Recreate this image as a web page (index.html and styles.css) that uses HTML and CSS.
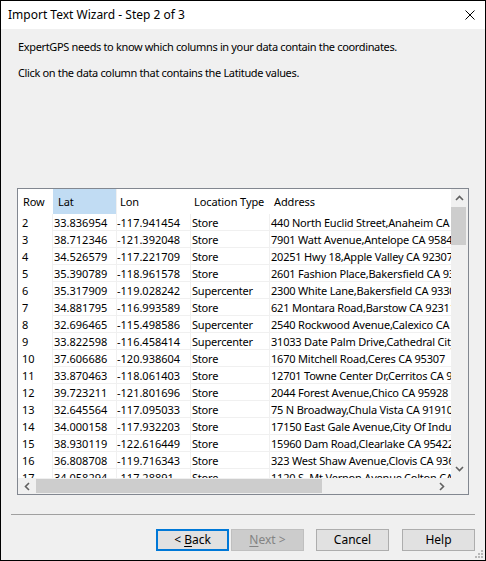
FILE: index.html
```html
<!DOCTYPE html>
<html>
<head>
<meta charset="utf-8">
<link rel="stylesheet" href="styles.css">
</head>
<body>
<div class="window">
  <div class="titlebar">
    <span class="title">Import Text Wizard - Step 2 of 3</span>
    <svg class="close" width="10" height="10" viewBox="0 0 10 10"><path d="M0.5 0.5 L9.5 9.5 M9.5 0.5 L0.5 9.5" stroke="#000" stroke-width="1" fill="none"/></svg>
  </div>
  <div class="content">
    <p class="intro">ExpertGPS needs to know which columns in your data contain the coordinates.</p>
    <p class="intro second">Click on the data column that contains the Latitude values.</p>
    <div class="grid">
      <div class="viewport">
        <div class="row head">
          <div class="c rn">Row</div><div class="c lat sel">Lat</div><div class="c lon">Lon</div><div class="c typ">Location Type</div><div class="c adr">Address</div>
        </div>
        <div class="row"><div class="c rn">2</div><div class="c lat">33.836954</div><div class="c lon">-117.941454</div><div class="c typ">Store</div><div class="c adr">440 North Euclid Street,Anaheim CA 92801</div></div>
        <div class="row"><div class="c rn">3</div><div class="c lat">38.712346</div><div class="c lon">-121.392048</div><div class="c typ">Store</div><div class="c adr">7901 Watt Avenue,Antelope CA 95843</div></div>
        <div class="row"><div class="c rn">4</div><div class="c lat">34.526579</div><div class="c lon">-117.221709</div><div class="c typ">Store</div><div class="c adr">20251 Hwy 18,Apple Valley CA 92307</div></div>
        <div class="row"><div class="c rn">5</div><div class="c lat">35.390789</div><div class="c lon">-118.961578</div><div class="c typ">Store</div><div class="c adr">2601 Fashion Place,Bakersfield CA 93306</div></div>
        <div class="row"><div class="c rn">6</div><div class="c lat">35.317909</div><div class="c lon">-119.028242</div><div class="c typ">Supercenter</div><div class="c adr">2300 White Lane,Bakersfield CA 93304</div></div>
        <div class="row"><div class="c rn">7</div><div class="c lat">34.881795</div><div class="c lon">-116.993589</div><div class="c typ">Store</div><div class="c adr">621 Montara Road,Barstow CA 92311</div></div>
        <div class="row"><div class="c rn">8</div><div class="c lat">32.696465</div><div class="c lon">-115.498586</div><div class="c typ">Supercenter</div><div class="c adr">2540 Rockwood Avenue,Calexico CA 92231</div></div>
        <div class="row"><div class="c rn">9</div><div class="c lat">33.822598</div><div class="c lon">-116.458414</div><div class="c typ">Supercenter</div><div class="c adr">31033 Date Palm Drive,Cathedral City CA 92234</div></div>
        <div class="row"><div class="c rn">10</div><div class="c lat">37.606686</div><div class="c lon">-120.938604</div><div class="c typ">Store</div><div class="c adr">1670 Mitchell Road,Ceres CA 95307</div></div>
        <div class="row"><div class="c rn">11</div><div class="c lat">33.870463</div><div class="c lon">-118.061403</div><div class="c typ">Store</div><div class="c adr">12701 Towne Center Dr,Cerritos CA 90703</div></div>
        <div class="row"><div class="c rn">12</div><div class="c lat">39.723211</div><div class="c lon">-121.801696</div><div class="c typ">Store</div><div class="c adr">2044 Forest Avenue,Chico CA 95928</div></div>
        <div class="row"><div class="c rn">13</div><div class="c lat">32.645564</div><div class="c lon">-117.095033</div><div class="c typ">Store</div><div class="c adr">75 N Broadway,Chula Vista CA 91910</div></div>
        <div class="row"><div class="c rn">14</div><div class="c lat">34.000158</div><div class="c lon">-117.932203</div><div class="c typ">Store</div><div class="c adr">17150 East Gale Avenue,City Of Industry CA 91745</div></div>
        <div class="row"><div class="c rn">15</div><div class="c lat">38.930119</div><div class="c lon">-122.616449</div><div class="c typ">Store</div><div class="c adr">15960 Dam Road,Clearlake CA 95422</div></div>
        <div class="row"><div class="c rn">16</div><div class="c lat">36.808708</div><div class="c lon">-119.716343</div><div class="c typ">Store</div><div class="c adr">323 West Shaw Avenue,Clovis CA 93612</div></div>
        <div class="row"><div class="c rn">17</div><div class="c lat">34.058294</div><div class="c lon">-117.28891</div><div class="c typ">Store</div><div class="c adr">1120 S. Mt Vernon Avenue,Colton CA 92324</div></div>
      </div>
      <div class="vscroll">
        <div class="arrow"><svg width="9" height="6" viewBox="0 0 9 6"><path d="M1 5 L4.5 1.5 L8 5" stroke="#606060" stroke-width="1.6" fill="none"/></svg></div>
        <div class="vthumb"></div>
        <div class="fill"></div>
        <div class="arrow"><svg width="9" height="6" viewBox="0 0 9 6"><path d="M1 1 L4.5 4.5 L8 1" stroke="#606060" stroke-width="1.6" fill="none"/></svg></div>
      </div>
      <div class="hscroll">
        <div class="harrow"><svg width="6" height="9" viewBox="0 0 6 9"><path d="M5 1 L1.5 4.5 L5 8" stroke="#606060" stroke-width="1.6" fill="none"/></svg></div>
        <div class="hthumb"></div>
        <div class="fill"></div>
        <div class="harrow"><svg width="6" height="9" viewBox="0 0 6 9"><path d="M1 1 L4.5 4.5 L1 8" stroke="#606060" stroke-width="1.6" fill="none"/></svg></div>
      </div>
      <div class="corner"></div>
    </div>
    <div class="sep"></div>
    <div class="buttons">
      <div class="btn default"><span>&lt; <u>B</u>ack</span></div>
      <div class="btn disabled"><span><u>N</u>ext &gt;</span></div>
      <div class="btn cancel"><span>Cancel</span></div>
      <div class="btn help"><span>Help</span></div>
    </div>
  </div>
  <svg class="grip" width="9" height="9" viewBox="0 0 9 9">
    <rect x="6" y="0" width="2" height="2" fill="#b8b8b8"/>
    <rect x="3" y="3" width="2" height="2" fill="#b8b8b8"/>
    <rect x="6" y="3" width="2" height="2" fill="#b8b8b8"/>
    <rect x="0" y="6" width="2" height="2" fill="#b8b8b8"/>
    <rect x="3" y="6" width="2" height="2" fill="#b8b8b8"/>
    <rect x="6" y="6" width="2" height="2" fill="#b8b8b8"/>
  </svg>
</div>
</body>
</html>
```

FILE: styles.css
```css
* { box-sizing: border-box; }
html, body { margin: 0; padding: 0; background: #fff; }
body {
  font-family: "Noto Sans", "Open Sans", sans-serif;
  font-size: 12px;
  color: #000;
}
.window {
  position: relative;
  width: 486px;
  height: 561px;
  border: 1px solid #000;
  background: #f0f0f0;
  display: flex;
  flex-direction: column;
}
.titlebar {
  height: 28px;
  flex: none;
  background: #fff;
  display: flex;
  align-items: center;
  justify-content: space-between;
  padding: 0 10px 0 7px;
}
.title { font-size: 12px; line-height: 16px; }
.close { display: block; margin-top: -1px; }
.content {
  padding: 0 16px;
  display: flex;
  flex-direction: column;
}
.intro {
  margin: 10px 0 0 0;
  padding-left: 1px;
  line-height: 16px;
  height: 16px;
  white-space: nowrap;
  font-size: 11px;
  letter-spacing: -0.35px;
}
.intro.second { margin-top: 10px; }
.grid {
  margin-top: 107px;
  height: 307px;
  border: 1px solid #828790;
  background: #fff;
  display: grid;
  grid-template-columns: 1fr 17px;
  grid-template-rows: 1fr 16px;
}
.viewport {
  overflow: hidden;
  font-size: 11px;
}
.row {
  display: grid;
  grid-template-columns: 35px 64px 74px 79px 300px;
  height: 17px;
}
.row.head { height: 25px; }
.c {
  white-space: nowrap;
  overflow: hidden;
  line-height: 16px;
  padding-top: 1px;
  padding-left: 1px;
  border-right: 1px solid #f0f0f0;
  border-bottom: 1px solid #f0f0f0;
}
.c.rn { padding-left: 4px; border-bottom: none; }
.c.lon { padding-left: 0; }
.c.typ, .c.adr { letter-spacing: -0.2px; }
.head .c {
  line-height: 25px;
  padding-top: 0;
  border-bottom: none;
  border-right: none;
  padding-left: 5px;
  letter-spacing: -0.1px;
}
.head .c.lat { border-right: 1px solid #f0f0f0; }
.head .c.lon { padding-left: 3px; }
.head .c.typ { padding-left: 3px; }
.head .c.adr { padding-left: 4px; }
.head .c.sel { background: #c1dcf3; }
.vscroll {
  background: #f0f0f0;
  display: flex;
  flex-direction: column;
}
.arrow {
  height: 18px;
  flex: none;
  display: flex;
  align-items: center;
  justify-content: center;
}
.vthumb {
  height: 38px;
  flex: none;
  margin: 0 2px 0 0;
  background: #cdcdcd;
}
.fill { flex: 1; }
.hscroll {
  background: #f0f0f0;
  display: flex;
}
.harrow {
  width: 18px;
  flex: none;
  display: flex;
  align-items: center;
  justify-content: center;
}
.hthumb {
  width: 286px;
  flex: none;
  margin: 1px 0;
  background: #cdcdcd;
}
.corner { background: #f0f0f0; }
.sep {
  margin: 19px -6px 0 -6px;
  height: 1px;
  background: #a0a0a0;
}
.buttons {
  margin: 14px -6px 0 0;
  display: flex;
  justify-content: flex-end;
}
.btn {
  width: 73px;
  height: 22px;
  border: 1px solid #adadad;
  background: #e1e1e1;
  display: flex;
  align-items: center;
  justify-content: center;
  font-size: 12px;
  line-height: 16px;
  white-space: pre;
}
.btn u { text-decoration-thickness: 1px; text-underline-offset: 2px; }
.btn.default { border: 2px solid #0078d7; }
.btn.disabled {
  margin-left: 2px;
  background: #cccccc;
  border-color: #bfbfbf;
  color: #838383;
}
.btn.cancel { margin-left: 12px; }
.btn.help { margin-left: 13px; }
.grip {
  position: absolute;
  right: 1px;
  bottom: 1px;
}
```
